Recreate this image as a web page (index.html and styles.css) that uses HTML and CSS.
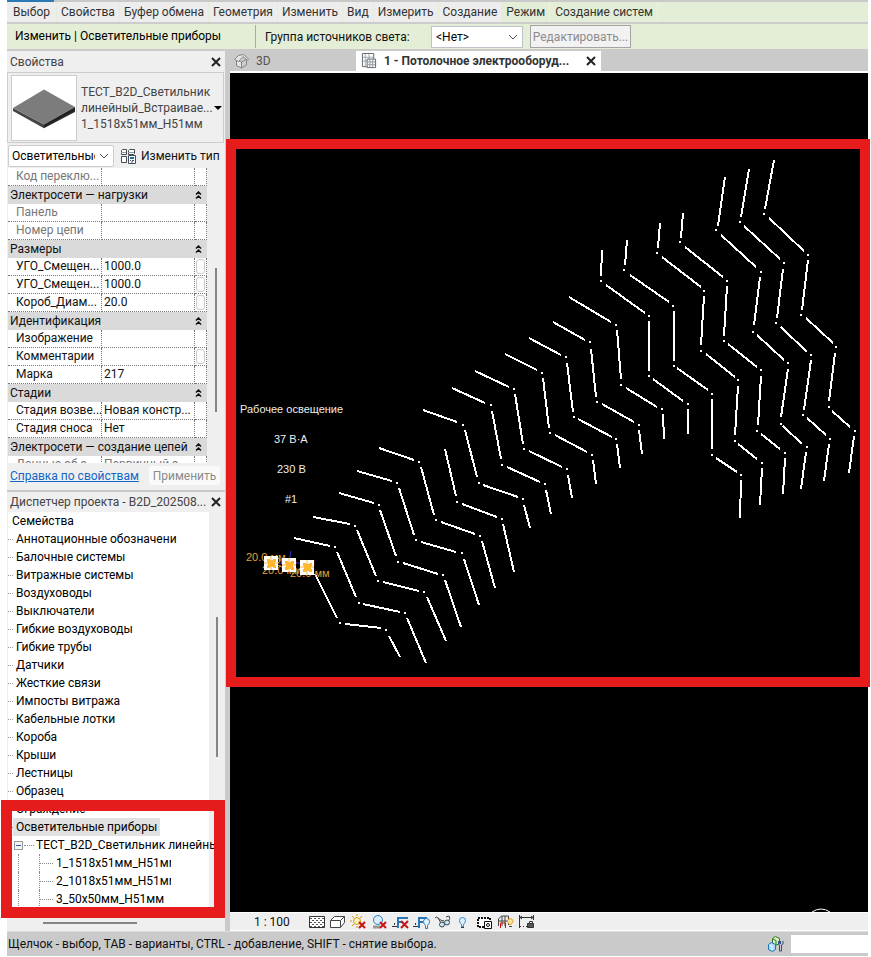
FILE: index.html
```html
<!DOCTYPE html>
<html lang="ru">
<head>
<meta charset="utf-8">
<title>Потолочное электрооборудование</title>
<link rel="stylesheet" href="styles.css">
</head>
<body>
<div class="app">
  <div class="strip"><span class="strip-active"></span></div>
  <nav class="ribbon">
    <button class="panel">Выбор</button>
    <button class="panel">Свойства</button>
    <button class="panel">Буфер обмена</button>
    <button class="panel">Геометрия</button>
    <button class="panel">Изменить</button>
    <button class="panel">Вид</button>
    <button class="panel">Измерить</button>
    <button class="panel">Создание</button>
    <button class="panel context">Режим</button>
    <button class="panel context">Создание систем</button>
  </nav>
  <div class="options">
    <span class="mode">Изменить | Осветительные приборы</span>
    <label class="group-label" for="light-group">Группа источников света:</label>
    <span class="select light-select">
      <select id="light-group"><option>&lt;Нет&gt;</option></select>
      <svg class="chev" viewBox="0 0 10 6"><path d="M1 1l4 4 4-4"/></svg>
    </span>
    <button class="edit" disabled>Редактировать...</button>
  </div>
  <div class="main">
    <aside class="side">
      <section class="props">
        <header class="bar"><span class="bar-title">Свойства</span>
          <button class="close" aria-label="Закрыть свойства"><svg viewBox="0 0 10 10"><path d="M1 1l8 8M9 1l-8 8"/></svg></button></header>
        <div class="type">
          <svg class="thumb" viewBox="0 0 66 66"><path fill="#444" d="M1 33L33 50 65 32v5L33 54 1 36z"/><path fill="#222" d="M33 50l32-18v4L33 53z"/><path fill="#7c7c7c" d="M33 14l32 18-32 18L1 33z"/></svg>
          <span class="type-name">ТЕСТ_B2D_Светильник<br>линейный_Встраивае...<br>1_1518x51мм_H51мм</span>
          <svg class="caret" viewBox="0 0 8 4"><path d="M0 0h8L4 4z"/></svg>
        </div>
        <div class="filter">
          <span class="select cat-select">
            <select aria-label="Категория"><option>Осветительные приборы</option></select>
            <svg class="chev" viewBox="0 0 10 6"><path d="M1 1l4 4 4-4"/></svg>
          </span>
          <button class="edit-type">
            <svg viewBox="0 0 16 16" fill="#fff" stroke="#444d55"><path d="M1.500 2.500l1-1h4v5h-5zM8.500 2.500l1-1h5v4l-1 1h-5zM1.500 8.500h5v6h-5z"/><path d="M1 4.500h5M8 4.500h6" stroke="#999"/><path d="M8.500 7.500h7v8h-7z"/><path stroke="#1c6fb5" stroke-width="2" d="M10 10h4"/><path d="M10 12.500h1m1 0h2M11 14h2"/></svg>
            Изменить тип</button>
        </div>
        <div class="grid-wrap">
          <div class="grid-view">
          <table class="grid">
            <colgroup><col class="c-name"><col class="c-val"><col class="c-btn"></colgroup>
            <tbody>
            <tr class="ro"><td>Код переклю...</td><td></td><td></td></tr>
            <tr class="head"><th colspan="2">Электросети — нагрузки</th><th><svg class="fold" viewBox="0 0 7 8"><path d="M1 3.500L3.500 1 6 3.500M1 7.500L3.500 5 6 7.500"/></svg></th></tr>
            <tr class="ro"><td>Панель</td><td></td><td></td></tr>
            <tr class="ro"><td>Номер цепи</td><td></td><td></td></tr>
            <tr class="head"><th colspan="2">Размеры</th><th><svg class="fold" viewBox="0 0 7 8"><path d="M1 3.500L3.500 1 6 3.500M1 7.500L3.500 5 6 7.500"/></svg></th></tr>
            <tr><td>УГО_Смещен...</td><td>1000.0</td><td><button class="assoc" aria-label="Связать"></button></td></tr>
            <tr><td>УГО_Смещен...</td><td>1000.0</td><td><button class="assoc" aria-label="Связать"></button></td></tr>
            <tr><td>Короб_Диам...</td><td>20.0</td><td><button class="assoc" aria-label="Связать"></button></td></tr>
            <tr class="head"><th colspan="2">Идентификация</th><th><svg class="fold" viewBox="0 0 7 8"><path d="M1 3.500L3.500 1 6 3.500M1 7.500L3.500 5 6 7.500"/></svg></th></tr>
            <tr><td>Изображение</td><td></td><td></td></tr>
            <tr><td>Комментарии</td><td></td><td><button class="assoc" aria-label="Связать"></button></td></tr>
            <tr><td>Марка</td><td>217</td><td></td></tr>
            <tr class="head"><th colspan="2">Стадии</th><th><svg class="fold" viewBox="0 0 7 8"><path d="M1 3.500L3.500 1 6 3.500M1 7.500L3.500 5 6 7.500"/></svg></th></tr>
            <tr><td>Стадия возве...</td><td>Новая констр...</td><td></td></tr>
            <tr><td>Стадия сноса</td><td>Нет</td><td></td></tr>
            <tr class="head"><th colspan="2">Электросети — создание цепей</th><th><svg class="fold" viewBox="0 0 7 8"><path d="M1 3.500L3.500 1 6 3.500M1 7.500L3.500 5 6 7.500"/></svg></th></tr>
            <tr class="ro"><td>Данные об э...</td><td>Первичный э...</td><td></td></tr>
            </tbody>
          </table>
          </div>
          <div class="track"><span class="thumb-bar props-thumb"></span></div>
        </div>
        <footer class="apply"><a href="#help">Справка по свойствам</a><button class="apply-btn" disabled>Применить</button></footer>
      </section>
      <section class="browser">
        <header class="bar"><span class="bar-title">Диспетчер проекта - B2D_202508...</span>
          <button class="close" aria-label="Закрыть диспетчер"><svg viewBox="0 0 10 10"><path d="M1 1l8 8M9 1l-8 8"/></svg></button></header>
        <div class="tree-wrap">
          <ul class="tree">
            <li class="root">Семейства</li>
            <li>Аннотационные обозначени</li>
            <li>Балочные системы</li>
            <li>Витражные системы</li>
            <li>Воздуховоды</li>
            <li>Выключатели</li>
            <li>Гибкие воздуховоды</li>
            <li>Гибкие трубы</li>
            <li>Датчики</li>
            <li>Жесткие связи</li>
            <li>Импосты витража</li>
            <li>Кабельные лотки</li>
            <li>Короба</li>
            <li>Крыши</li>
            <li>Лестницы</li>
            <li>Образец</li>
            <li>Ограждение</li>
            <li class="picked"><span>Осветительные приборы</span></li>
            <li class="family"><button class="minus" aria-label="Свернуть"></button><i class="dots"></i>ТЕСТ_B2D_Светильник линейны</li>
            <li class="size"><i class="dots"></i><span>1_1518x51мм_H51мм</span></li>
            <li class="size"><i class="dots"></i><span>2_1018x51мм_H51мм</span></li>
            <li class="size"><i class="dots"></i><span>3_50x50мм_H51мм</span></li>
          </ul>
          <div class="track"><span class="thumb-bar tree-thumb"></span></div>
        </div>
        <div class="h-track"><span></span></div>
        <div class="mark mark-tree"></div>
      </section>
    </aside>
    <main class="view">
      <div class="tabs">
        <button class="tab">
          <svg viewBox="0 0 16 16" fill="#e4e4e4" stroke="#868686"><path d="M3.500 7v5.500l5 2.500V9z"/><path d="M8.500 9v6l5-3V6z" fill="#ccc"/><path d="M1.500 6.500l4-4 5-1 5 4.500-1 1.500-4.500-4-4.500 5z"/></svg>
          3D</button>
        <button class="tab current">
          <svg viewBox="0 0 17 17" fill="#fff" stroke="#59616a"><path d="M1.500 .5h12v14h-12z"/><path stroke="#a0a6ac" d="M4.500 1v13M8.500 1v13M2 4.500h11M2 8.500h11"/><path d="M6.500 6.500h9v9h-9z"/><path d="M9.500 7v8M12.500 7v8M7 9.500h8M7 12.500h8" stroke="#8c939a"/></svg>
          1 - Потолочное электрооборуд...
          <svg class="x" viewBox="0 0 10 10"><path d="M1 1l8 8M9 1l-8 8"/></svg></button>
      </div>
      <div class="canvas">
        <svg class="drawing" viewBox="230 73 638 839" preserveAspectRatio="xMinYMin meet">
          <path class="lamp" d="M315 574L337 618M345 624L381 628M389 636L400 657
            M294 538L330 546M337 552L356 597M363 604L400 612M407 618L426 663
            M313 517L350 524M357 530L376 576M383 582L419 591M427 597L446 641
            M339 493L374 503M380 510L396 556M403 563L438 574M445 580L461 627
            M357 471L392 481M399 488L414 535M421 542L456 552M464 559L479 605
            M379 448L414 460M421 467L434 515M441 522L475 534M482 541L495 588
            M445 449L456 496M462 504L497 517M503 524L514 572
            M423 410L457 422M465 430L477 477M483 485L518 497M524 505L530 528
            M452 388L485 403M492 411L501 459M507 467L540 482M546 490L551 514
            M475 371L509 387M515 394L523 444M529 451L562 467M568 475L572 498
            M505 354L537 370M543 378L549 428M555 435L587 452M593 460L596 484
            M529 338L561 355M567 363L573 412M578 419L612 437M617 444L620 468
            M553 322L585 340M591 349L596 397M602 404L634 422M639 430L642 454
            M569 297L611 322M617 330L621 379M626 388L657 407M663 414L664 439
            M602 250L601 276M606 285L645 313M649 321L649 371M653 379L683 401M688 409L688 434
            M627 240L625 265M630 275L669 302M674 311L674 361M677 368L708 390M712 399L712 449M716 458L737 472M741 480L740 518
            M660 223L658 248M662 257L701 287M704 296L701 345M706 354L735 377M738 386L735 435M738 444L757 459M762 468L760 505
            M683 213L681 238M685 247L723 277M727 286L724 336M728 344L757 367M761 376L758 425M761 434L780 449M785 458L783 494
            M725 177L718 226M721 235L756 267M760 277L754 325M757 335L784 360M788 369L781 417M783 426L802 444M806 452L801 489
            M749 169L741 217M744 226L780 259M783 269L777 318M781 327L807 352M811 360L804 410M807 418L826 435M829 444L824 481
            M774 160L765 209M769 218L804 251M808 260L802 310M806 318L833 343M835 353L829 401M832 411L850 427M854 436L849 473"/>
          <path class="node" d="M340 623h0M386 630h0M335 547h0M359 603h0M405 613h0M355 526h0M378 581h0M424 592h0M379 505h0M398 562h0M443 575h0
            M397 483h0M416 540h0M462 553h0M419 462h0M436 520h0M480 536h0M457 502h0M502 519h0M463 425h0M479 483h0M523 499h0
            M491 405h0M502 465h0M545 484h0M514 389h0M524 449h0M567 469h0M542 373h0M550 433h0M592 455h0M566 357h0M574 417h0M616 439h0
            M590 342h0M597 402h0M639 425h0M616 325h0M621 385h0M662 409h0M601 281h0M649 316h0M649 376h0M688 404h0
            M624 270h0M673 306h0M674 366h0M712 394h0M712 455h0M741 475h0M657 253h0M704 291h0M701 351h0M738 380h0M735 441h0M762 463h0
            M680 242h0M727 281h0M724 341h0M761 370h0M757 431h0M785 453h0M716 230h0M761 272h0M753 332h0M788 363h0M781 424h0M807 447h0
            M740 222h0M784 263h0M776 323h0M811 355h0M803 415h0M830 439h0M764 214h0M808 255h0M801 315h0M836 347h0M829 407h0M855 431h0"/>
          <path class="arc" d="M812 912q9-6 18 0"/>
          <g class="note">
            <text x="240" y="413">Рабочее освещение</text>
            <text x="274" y="443">37 В·А</text>
            <text x="277" y="473">230 В</text>
            <text x="285" y="503">#1</text>
          </g>
          <path class="wire" d="M291 551l-2 10M264 563h50M286 571l5-3"/>
          <g class="dim">
            <text x="246" y="561">20.0 мм</text>
            <text x="275" y="566">20.0 мм</text>
            <text x="262" y="574">20.0 мм</text>
            <text x="290" y="577">20.0 мм</text>
          </g>
          <g>
            <path fill="#fff" d="M264 556h14v14h-14zM282 558h14v14h-14zM300 560h14v15h-14z"/>
            <path fill="#ffb733" d="M267 559h3v1h3v-1h3v3h-1v3h1v3h-3v-1h-3v1h-3v-3h1v-3h-1zM285 561h3v1h3v-1h3v3h-1v3h1v3h-3v-1h-3v1h-3v-3h1v-3h-1zM303 563h3v1h3v-1h3v3h-1v3h1v3h-3v-1h-3v1h-3v-3h1v-3h-1z"/>
            <path stroke="#ffb733" fill="none" d="M264 563h14M271 556v14M282 565h14M289 558v14M300 567h14M307 560v15"/>
          </g>
        </svg>
        <div class="mark mark-canvas"></div>
      </div>
      <div class="viewbar">
        <button class="scale">1 : 100</button>
        <button class="vb" aria-label="Уровень детализации"><svg viewBox="0 0 18 16"><path fill="#fff" stroke="#333" d="M1.500 2.500h15v11h-15z"/><path stroke="#555" stroke-dasharray="2 2" d="M2 4.500h14M4 6.500h12M2 8.500h14M4 10.500h12M2 12.500h14"/></svg></button>
        <button class="vb" aria-label="Визуальный стиль"><svg viewBox="0 0 18 16" fill="#fff" stroke="#444"><path d="M1.500 6.500l4-4h10v6l-4 5h-10z"/><path d="M1.500 6.500h10v7m0-7l4-4"/></svg></button>
        <button class="vb" aria-label="Солнце"><svg viewBox="0 0 18 16" fill="none"><circle cx="7" cy="7" r="3.500" fill="#fff3bb" stroke="#d79a16"/><path stroke="#d79a16" d="M7 0v2M7 12v2M0 7h2M2 2l2 2M12 2l-2 2M2 12l2-2"/><path stroke="#c81414" stroke-width="2" d="M9 8l6 6M15 8l-6 6"/></svg></button>
        <button class="vb" aria-label="Тени"><svg viewBox="0 0 18 16" fill="none"><path stroke="#999" stroke-width="3" d="M2 13h7"/><circle cx="7" cy="6" r="4.500" fill="#d9efff" stroke="#2d80bd"/><path stroke="#c81414" stroke-width="2" d="M9 8l6 6M15 8l-6 6"/></svg></button>
        <button class="vb" aria-label="Обрезать вид"><svg viewBox="0 0 18 16" fill="none"><path stroke="#2878b8" stroke-width="2" d="M6 14V4h10M6 8h5"/><path stroke="#333" stroke-dasharray="2 1" d="M0 12.500h5M2.500 9v4"/><path stroke="#c81414" stroke-width="2" d="M9 7l7 7M16 7l-7 7"/></svg></button>
        <button class="vb" aria-label="Область подрезки"><svg viewBox="0 0 18 16" fill="none"><path stroke="#2878b8" stroke-width="2" d="M6 14V4h8M6 8h4"/><path stroke="#333" stroke-dasharray="2 1" d="M0 12.500h5M2.500 9v4"/><path fill="#e6f4ff" stroke="#2878b8" d="M12.500 11.500q-2-2-2-4a3 3 0 0 1 6 0q0 2-2 4v3h-2z"/></svg></button>
        <button class="vb" aria-label="Временное скрытие"><svg viewBox="0 0 18 16" fill="none" stroke="#39464d"><path d="M1 4q2-2 3 0l3 5M4 4q3 3 6 3M14 8q3-4 1-6l-3 1"/><circle cx="8" cy="10.500" r="2.500" fill="#cde6f4"/><circle cx="13" cy="8.500" r="2.500" fill="#cde6f4"/></svg></button>
        <button class="vb" aria-label="Показать скрытые"><svg viewBox="0 0 18 16"><path fill="#dff1ff" stroke="#2b86cc" d="M6.500 10.500q-2-2-2-4a3 3 0 0 1 6 0q0 2-2 4v2h-2z"/><path stroke="#333" d="M6 13.500h3"/></svg></button>
        <button class="vb" aria-label="Свойства вида"><svg viewBox="0 0 18 16" fill="#fff" stroke="#111"><path stroke-width="2" stroke-dasharray="2 1" d="M2 4h12v9H2z"/><path d="M8.500 7.500h7v7h-7z"/><circle cx="12" cy="11" r="1.500"/></svg></button>
        <button class="vb" aria-label="Аналитическая модель"><svg viewBox="0 0 18 16" fill="none" stroke="#444"><path d="M1.500 12V5l3-3h7v9M5 2v10M8 2v10M1.500 7h10"/><path stroke="#c81414" d="M3.500 14V9h5v5"/><path stroke="#e89a17" fill="#ffe6a0" d="M12.500 10.500q-2-2-2-4a3 3 0 0 1 5.500 0q0 2-2 4z"/><path d="M12 12.500h3"/></svg></button>
        <button class="vb" aria-label="Зависимости"><svg viewBox="0 0 18 16" fill="none" stroke="#333"><path d="M1.500 1v13M15.500 1v5M2 3.500h13M4 2l-2 1.500L4 5M13 2l2 1.500L13 5"/><path stroke-dasharray="1 2" d="M2 12.500h7"/><path d="M11.500 9V7.500h3V9"/><path fill="#555" d="M9.500 9.500h6v4h-6z"/></svg></button>
      </div>
    </main>
  </div>
  <footer class="status">
    <span class="hint">Щелчок - выбор, TAB - варианты, CTRL - добавление, SHIFT - снятие выбора.</span>
    <svg class="sets" viewBox="0 0 18 18"><path fill="#d6efc6" stroke="#2c7a1e" d="M5.500 3.500l3-2 4 2v5l-4 2-3-2z"/><path stroke="#2c7a1e" d="M6 4l3 1.500V10"/><path fill="#a9dcff" stroke="#1b74b5" d="M1.500 9.500l3-2 4 2v5l-3 2-4-2z"/><path stroke="#fff" d="M2.500 10L5 11.500V15"/><path fill="none" stroke="#2f4f7d" d="M11.500 6v3l1 1v6h2v-6l1.500-1V6M13.500 6v3"/></svg>
    <input class="workset" aria-label="Рабочий набор">
  </footer>
</div>
</body>
</html>
```

FILE: styles.css
```css
* { box-sizing: border-box; }
body { margin: 0; background: #fff; color: #1b1b1b; font: 12px/18px Roboto, "Noto Sans", sans-serif; }
button, select, input { font: inherit; color: inherit; margin: 0; padding: 0; border: 0; background: none; border-radius: 0; }
ul { list-style: none; margin: 0; padding: 0; }

.app { display: flex; flex-direction: column; height: 100vh; padding: 0 3px 1px 7px; overflow: hidden; }
.strip { flex: none; height: 2px; background: #c9c9c9; display: flex; }
.strip-active { width: 47px; background: #2a78b4; }

.ribbon { flex: none; display: flex; gap: 1px; height: 20px; background: #e4eed6; color: #333; }
.panel { padding: 0 4px; background: #ededed; white-space: nowrap; line-height: 20px; }
.panel:first-child { padding: 0 6px; }
.panel.context { background: none; border-right: 1px solid #eee; }

.options { flex: none; display: flex; align-items: center; height: 29px; padding-left: 8px; background: #e4eed6; border-top: 2px solid #ccc; border-bottom: 2px solid #cacaca; white-space: nowrap; }
.mode { width: 241px; border-right: 1px solid #aaa; line-height: 23px; color: #000; }
.group-label { padding-left: 9px; width: 175px; color: #111; }
.select { position: relative; display: block; }
.select select { appearance: none; width: 100%; height: 100%; color: #000; }
.chev { position: absolute; right: 4px; top: 50%; width: 10px; height: 6px; margin-top: -3px; fill: none; stroke: #555; pointer-events: none; }
.light-select { width: 92px; height: 22px; background: #fff; border: 1px solid #bfc2c9; }
.light-select select { padding-left: 4px; }
.edit { width: 101px; height: 23px; margin-left: 7px; border: 1px solid #a3a3a3; background: #f2f2f2; color: #8b8b8b; }

.main { flex: 1; min-height: 0; display: flex; background: #cacaca; gap: 4px; }
.side { flex: none; width: 218px; display: flex; flex-direction: column; background: #efefef; }
.bar { flex: none; display: flex; align-items: center; height: 21px; padding: 0 4px 0 3px; color: #444; }
.bar-title { flex: 1; min-width: 0; white-space: nowrap; }
.close { flex: none; width: 10px; height: 18px; }
.close svg, .x { display: block; width: 10px; height: 10px; fill: none; stroke: #222; stroke-width: 2; }
.close svg { margin: 4px 0; }

.type { display: flex; align-items: center; height: 71px; margin-right: 1px; border: 1px solid #ccc; padding-left: 3px; color: #444; line-height: 16px; }
.thumb { flex: none; width: 66px; height: 66px; background: #fff; border: 1px solid #ccc; }
.type-name { flex: 1; min-width: 0; padding-left: 4px; white-space: nowrap; }
.caret { flex: none; width: 8px; height: 4px; margin-right: 1px; }
.filter { display: flex; align-items: center; height: 25px; padding-left: 1px; }
.cat-select { flex: none; width: 106px; height: 22px; background: #fff; border: 1px solid #ccc; border-radius: 2px; }
.cat-select select { padding: 0 18px 0 3px; }
.edit-type { display: flex; align-items: center; gap: 5px; height: 20px; margin-left: 6px; color: #111; white-space: nowrap; }
.edit-type svg { width: 16px; height: 16px; }

.grid-wrap { display: flex; height: 295px; overflow: hidden; padding-left: 1px; }
.grid-view { width: 199px; overflow: hidden; }
.grid { table-layout: fixed; width: 199px; border-collapse: separate; border-spacing: 0; background: #fff; color: #111; }
.c-name { width: 94px; }
.c-val { width: 93px; }
.c-btn { width: 12px; }
.grid td, .grid th { height: 18px; padding: 0; line-height: 17px; text-align: left; font-weight: normal; white-space: nowrap; overflow: hidden; }
.grid td { border-right: 1px dotted #777; border-bottom: 1px dotted #777; padding-left: 2px; }
.grid td:first-child { padding-left: 8px; }
.grid td:last-child { padding: 0 0 0 1px; }
.grid .ro td { color: #777; }
.grid th { background: #dadada; padding-left: 2px; overflow: visible; }
.grid th:last-child { padding: 0; }
.fold { display: block; width: 7px; height: 8px; fill: none; stroke: #111; stroke-width: 1.5; }
.assoc { display: block; width: 9px; height: 15px; border: 1px solid #ccc; border-radius: 3px; background: #fdfdfd; }
.track { flex: 1; background: #efefef; }
.thumb-bar { display: block; width: 2px; background: #858585; }
.props-thumb { margin: 100px 0 0 8px; height: 144px; }
.apply { display: flex; align-items: center; justify-content: space-between; height: 27px; padding: 0 5px 2px 3px; }
.apply a { color: #1167c7; white-space: nowrap; }
.apply-btn { width: 71px; height: 19px; background: #fafafa; border-radius: 3px; color: #8a8a8a; }

.browser { position: relative; flex: 1; min-height: 0; display: flex; flex-direction: column; border-top: 2px solid #cacaca; }
.browser .bar { height: 20px; }
.tree-wrap { flex: 1; min-height: 0; display: flex; overflow: hidden; padding-left: 1px; }
.tree { position: relative; z-index: 1; width: 201px; background: #fff; color: #000; }
.tree li { display: flex; align-items: center; height: 18px; white-space: nowrap; }
.tree li::before { content: ""; flex: none; width: 5px; margin-right: 3px; border-top: 1px dotted #999; }
.tree .root { padding-left: 4px; }
.tree .root::before, .tree .family::before, .tree .size::before { display: none; }
.picked span { background: #e1e1e1; margin-left: -3px; padding: 0 3px; }
.tree .family { padding: 0 0 0 6px; }
.minus { flex: none; width: 9px; height: 9px; border: 1px solid #999; background: linear-gradient(#35a, #35a) center / 5px 1px no-repeat #f4f4f4; }
.dots { flex: none; width: 10px; border-top: 1px dotted #888; margin: 0 2px 0 1px; }
.tree .size { margin-left: 10px; padding: 0 0 0 20px; border-left: 1px dotted #888; }
.size .dots { width: 14px; height: 18px; border: 0; margin: 0 3px 0 0; border-left: 1px dotted #888; background: repeating-linear-gradient(90deg, #888 0 1px, transparent 1px 2px) 0 9px / 14px 1px no-repeat; }
.size span { max-width: 115px; overflow: hidden; }
.tree-thumb { margin: 105px 0 0 7px; height: 140px; }
.h-track { flex: none; height: 20px; padding: 11px 0 0 36px; }
.h-track span { display: block; width: 94px; height: 2px; background: #858585; }

.mark { position: absolute; z-index: 2; border: 10px solid #e61c1c; pointer-events: none; }
.mark-tree { left: -6px; right: 0; top: 308px; height: 118px; border-width: 11px; }
.mark-canvas { left: -4px; right: -2px; top: 66px; height: 548px; }

.view { flex: 1; min-width: 0; display: flex; flex-direction: column; padding-left: 1px; }
.tabs { flex: none; display: flex; height: 22px; border-bottom: 2px solid #fff; }
.tab { display: flex; align-items: center; gap: 7px; width: 126px; padding-left: 3px; color: #555; white-space: nowrap; }
.tab svg { flex: none; width: 16px; height: 16px; }
.tab.current { width: 245px; padding: 0 5px; background: #fff; color: #333; font-weight: bold; }
.tab .x { width: 10px; height: 10px; margin-left: auto; }
.canvas { position: relative; flex: 1; min-height: 0; background: #000; }
.drawing { display: block; width: 100%; height: 100%; }
.lamp { fill: none; stroke: #fff; stroke-width: 2; shape-rendering: crispEdges; }
.node { stroke: #fff; stroke-width: 2; stroke-linecap: square; shape-rendering: crispEdges; }
.arc { fill: none; stroke: #fff; }
.wire { fill: none; stroke: #2433c8; }
.note { fill: #eee; font: 11px "Liberation Sans", sans-serif; }
.dim { fill: #e2a336; font: 11px "Liberation Sans", sans-serif; }

.viewbar { flex: none; display: flex; align-items: center; height: 19px; padding-left: 24px; background: #efefef; border-bottom: 1px solid #fff; border-top: 1px solid #fff; }
.scale { width: 54px; text-align: left; color: #111; }
.vb { width: 21px; height: 16px; }
.vb svg { display: block; width: 18px; height: 16px; }

.status { flex: none; display: flex; align-items: center; height: 25px; background: #cacaca; border-top: 1px solid #ddd; }
.hint { flex: 1; padding-left: 1px; white-space: nowrap; color: #111; }
.sets { width: 18px; height: 18px; fill: none; }
.workset { width: 77px; height: 18px; margin-left: 6px; background: #fff; }
```
